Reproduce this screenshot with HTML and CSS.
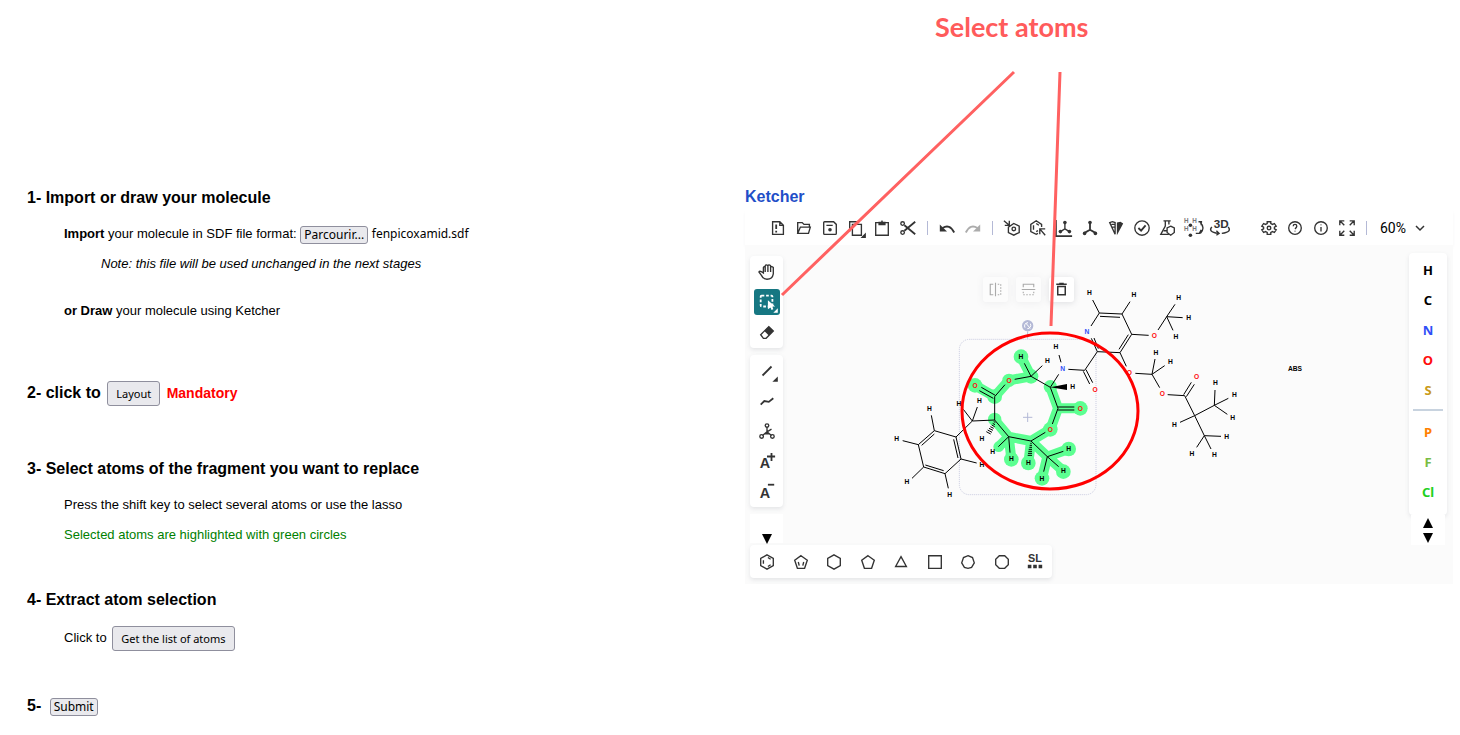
FILE: index.html
```html
<!DOCTYPE html>
<html lang="en">
<head>
    <meta charset="UTF-8">
    <meta name="viewport" content="width=device-width, initial-scale=1.0">
    <title>Fragment replacement</title>
    <link rel="stylesheet" href="styles.css">
</head>
<body>
<main class="page">
    <form class="steps" id="fragment-form">
        <section class="step">
            <h2>1- Import or draw your molecule</h2>
            <p><b>Import</b> your molecule in SDF file format:
                <button type="button" class="browse" id="browse">Parcourir...</button>
                <span class="file-name">fenpicoxamid.sdf</span>
                <input type="file" id="sdf-file" accept=".sdf" aria-label="SDF file" hidden></p>
            <p class="note">Note: this file will be used unchanged in the next stages</p>
            <p class="draw"><b>or Draw</b> your molecule using Ketcher</p>
        </section>

        <section class="step layout-step">
            <h2>2- click to <button type="button" class="big-button">Layout</button> <span class="mandatory">Mandatory</span></h2>
        </section>

        <section class="step">
            <h2>3- Select atoms of the fragment you want to replace</h2>
            <p>Press the shift key to select several atoms or use the lasso</p>
            <p class="green">Selected atoms are highlighted with green circles</p>
        </section>

        <section class="step">
            <h2>4- Extract atom selection</h2>
            <p>Click to <button type="button" class="big-button">Get the list of atoms</button></p>
        </section>

        <section class="step">
            <h2>5- <button type="submit" class="submit">Submit</button></h2>
        </section>
    </form>

    <section class="sketch">
        <p class="callout">Select atoms</p>
        <h2 class="ketcher-title">Ketcher</h2>

        <div class="editor">
            <div class="toolbar">
                <div class="tools">
                    <button type="button" aria-label="New"><svg viewBox="0 0 20 20"><path d="M4 3h8l4 4v10H4z M12 3v4h4"/><path d="M8 6v5M8 13v2" stroke-width="2"/></svg></button>
                    <button type="button" aria-label="Open"><svg viewBox="0 0 20 20"><path d="M3 16V4h5l2 2h6v3M3 16l3-7h11l-2 7z"/></svg></button>
                    <button type="button" aria-label="Save"><svg viewBox="0 0 20 20"><path d="M4 3h10l3 3v10q0 1-1 1H4q-1 0-1-1V4q0-1 1-1zM6 7h7"/><circle class="solid" cx="10" cy="12" r="2"/></svg></button>
                    <button type="button" aria-label="Copy"><svg viewBox="0 0 20 20"><path d="M3 14V3h10M6 6h10v12H6z"/><path class="solid" d="M21 15v6h-6z"/></svg></button>
                    <button type="button" aria-label="Paste"><svg viewBox="0 0 20 20"><path d="M3 4h14v14H3z"/><path class="solid" d="M6 3h3q1-3 2 0h3v4H6z"/></svg></button>
                    <button type="button" aria-label="Cut"><svg viewBox="0 0 20 20"><circle cx="4" cy="5" r="2"/><circle cx="4" cy="15" r="2"/><path d="M6 7l12 10M6 13L18 3" stroke-width="2"/></svg></button>
                    <span class="divider"></span>
                    <button type="button" aria-label="Undo"><svg viewBox="0 0 20 20"><path d="M5 10q8-5 13 5" stroke-width="2"/><path class="solid" d="M2 6v8h8z"/></svg></button>
                    <button type="button" aria-label="Redo" disabled><svg viewBox="0 0 20 20"><path d="M15 10q-8-5-13 5" stroke-width="2"/><path class="solid" d="M18 6v8h-8z"/></svg></button>
                    <span class="divider"></span>
                    <button type="button" aria-label="Aromatize"><svg viewBox="0 0 20 20"><path d="M12 5l6 3v7l-6 3-6-3V9z"/><circle cx="12" cy="11" r="2"/><path d="M1 2l6 5M7 2v5H2"/></svg></button>
                    <button type="button" aria-label="Dearomatize"><svg viewBox="0 0 20 20"><path d="M10 16l-2 1-6-3V6l6-4 6 4v3M5 7v5M8 5l3 2M8 14l2-1"/><path d="M12 11l6 7M12 17v-6h6"/></svg></button>
                    <button type="button" aria-label="Layout"><svg viewBox="0 0 20 20"><path d="M1 1v18h18" stroke-width="2"/><path d="M11 4v7l-5 3M11 11l5 3"/><circle class="solid" cx="11" cy="4" r="2"/><circle class="solid" cx="6" cy="14" r="2"/><circle class="solid" cx="16" cy="14" r="2"/></svg></button>
                    <button type="button" aria-label="Clean up"><svg viewBox="0 0 20 20"><path d="M10 4v8l-7 4M10 12l7 4" stroke-width="2"/><circle class="solid" cx="10" cy="4" r="2"/><circle class="solid" cx="4" cy="16" r="2"/><circle class="solid" cx="16" cy="16" r="2"/></svg></button>
                    <button type="button" aria-label="Calculate CIP"><svg viewBox="0 0 20 20"><path d="M9 17L3 4l3-1 3 1zM5 6h4M6 9h3"/><path class="solid" d="M11 18V4l4-1 3 2z"/></svg></button>
                    <button type="button" aria-label="Check structure"><svg viewBox="0 0 20 20"><circle cx="10" cy="10" r="8"/><path d="M6 10l3 3 5-6" stroke-width="2"/></svg></button>
                    <button type="button" aria-label="Calculated values"><svg viewBox="0 0 20 20"><path d="M5 2h8M7 2v6L2 17h9M11 2v4"/><path d="M13 8l4 2v5l-4 3-4-3v-5zM5 13h4"/></svg></button>
                    <button type="button" aria-label="Add or remove explicit hydrogens"><svg viewBox="0 0 20 20"><g class="solid"><circle cx="6" cy="7" r="2"/><circle cx="6" cy="18" r="2"/></g><text class="icon-h" x="-1" y="4">H</text><text class="icon-h" x="8" y="4">H</text><text class="icon-h" x="-1" y="13">H</text><text class="icon-h" x="8" y="13">H</text><path d="M17 4q6 6 0 12M15 3h4M18 3v4M18 12l-2 4h-4"/></svg></button>
                    <button type="button" aria-label="3D viewer"><svg viewBox="0 0 20 20"><text class="icon-3d" x="3" y="10">3D</text><path d="M1 9q-5 5 7 7M6 13l3 3-3 2M19 9q5 5-7 7"/></svg></button>
                </div>
                <div class="tools">
                    <button type="button" aria-label="Settings"><svg viewBox="0 0 20 20"><path d="M8 3h4v2l2 1 2-1 2 3-2 1v2l2 1-2 3-2-1-2 1v2H8v-2l-2-1-2 1-2-3 2-1V9L2 8l2-3 2 1 2-1z"/><circle cx="10" cy="10" r="2"/></svg></button>
                    <button type="button" aria-label="Help"><svg viewBox="0 0 20 20"><circle cx="10" cy="10" r="7"/><path d="M8 8q0-2 2-2t2 2q0 1-2 3M10 13v1"/></svg></button>
                    <button type="button" aria-label="About"><svg viewBox="0 0 20 20"><circle cx="10" cy="10" r="7"/><path d="M10 9v5M10 6v1"/></svg></button>
                    <button type="button" aria-label="Fullscreen"><svg viewBox="0 0 20 20"><path d="M2 7V2h5M2 2l5 5M13 2h5v5M18 2l-5 5M2 13v5h5M2 18l5-5M18 13v5h-5M18 18l-5-5"/></svg></button>
                    <span class="divider"></span>
                    <label class="zoom">
                        <select aria-label="Zoom"><option>60%</option><option>100%</option><option>150%</option></select>
                        <svg viewBox="0 0 10 10"><path d="M1 3l4 4 4-4"/></svg>
                    </label>
                </div>
            </div>

            <div class="workspace">
                <!-- drawing area, 3 units per pixel -->
                <svg class="canvas" viewBox="-405 -75 2124 1014" preserveAspectRatio="xMinYMin meet" role="img" aria-label="Fenpicoxamid molecule">
                    <g class="selected">
                        <path d="M285 346L344 380L387 331L453 319L423 260M511 352L534 415H601M534 415L511 478L453 513L386 500L344 450M386 500L356 530M386 500L394 566M453 513L445 579M453 513L502 560L566 537M502 560L550 603M502 560L486 625"/>
                        <circle cx="285" cy="346" r="22"/><circle cx="387" cy="331" r="20"/><circle cx="423" cy="260" r="22"/>
                        <circle cx="453" cy="319" r="22"/><circle cx="511" cy="350" r="20"/><circle cx="601" cy="415" r="22"/>
                        <circle cx="511" cy="478" r="22"/><circle cx="344" cy="380" r="22"/><circle cx="344" cy="448" r="20"/>
                        <circle cx="394" cy="568" r="22"/><circle cx="445" cy="579" r="22"/><circle cx="356" cy="530" r="16"/>
                        <circle cx="566" cy="537" r="22"/><circle cx="550" cy="605" r="22"/><circle cx="486" cy="625" r="22"/>
                    </g>
                    <rect class="selection-box" x="238" y="208" width="410" height="466" rx="30"/>
                    <path class="selection-cross" d="M443 428v28M429 442h28M443 184v22"/>
                    <circle class="rotate-handle" cx="443" cy="167" r="17"/>
                    <path class="rotate-arrows" d="M435 173a10 10 0 0 1 9-15M451 161a10 10 0 0 1-9 15M437 159l14 16"/>

                    <!-- benzyl ring -->
                    <path class="bond" d="M163 482L228 501L243 567L195 611L131 591L115 524ZM163 492L125 526M221 508L234 564M191 602L136 585"/>
                    <path class="bond" d="M163 482L154 436M115 524L68 512M131 591L96 625M195 611L205 655M243 567L290 579M228 501L277 453L292 411M277 453L250 418M277 453L344 450"/>
                    <!-- nine membered ring -->
                    <path class="bond" d="M344 450V380L375 344M346 376L304 352M340 385L298 362M404 328L453 319L433 280M453 319L487 287M453 319L511 352L536 313M511 352L534 415L517 462M534 411H583M534 420H583M496 487L453 513L386 500L344 450M386 500L355 530M386 500L390 548M453 513L502 560L550 544M502 560L536 590M502 560L491 605"/>
                    <path class="wedge" d="M511 352L561 342V360Z"/>
                    <path class="bond" d="M341 455l5 2M338 460l7 4M335 465l9 5M331 470l10 5M327 475l12 6M323 480l13 7M319 485l13 7M451 520h4M449 526h7M448 532h8M446 538h10M445 544h11M444 550h12M443 556h13"/>
                    <!-- amide and pyridine -->
                    <path class="bond" d="M543 277L537 255M565 298L614 301L652 245M610 304L629 342M618 299L638 338M633 168L658 129L726 132L755 193L720 248L652 245L634 205M655 236L642 204M660 139L720 142M745 194L717 238M658 129L638 90M726 132L750 95M755 193L806 196M834 180L860 140L885 103M860 140L908 143M860 140L879 181"/>
                    <!-- ester chain -->
                    <path class="bond" d="M720 248L739 289M766 310L816 313L825 267M816 313L854 287M816 313L839 353M863 374L914 377L944 437L900 457M911 374L934 337M919 380L943 343M944 437L1003 406L1005 360M1003 406L1045 385M1003 406L1042 433M944 437L973 497L1023 499M973 497L950 532M973 497L993 537"/>

                    <g class="atom">
                        <text x="628" y="76">H</text><text x="762" y="82">H</text><text x="896" y="91">H</text><text x="926" y="151">H</text>
                        <text x="888" y="207">H</text><text x="828" y="254">H</text><text x="871" y="282">H</text><text x="1006" y="345">H</text>
                        <text x="1063" y="382">H</text><text x="1058" y="450">H</text><text x="883" y="471">H</text><text x="1040" y="506">H</text>
                        <text x="936" y="559">H</text><text x="1003" y="562">H</text><text x="528" y="238">H</text><text x="502" y="278">H</text>
                        <text x="423" y="267">H</text><text x="578" y="357">H</text><text x="298" y="398">H</text><text x="237" y="407">H</text>
                        <text x="148" y="423">H</text><text x="50" y="514">H</text><text x="81" y="643">H</text><text x="209" y="681">H</text>
                        <text x="306" y="591">H</text><text x="306" y="513">H</text><text x="338" y="553">H</text><text x="394" y="573">H</text>
                        <text x="445" y="586">H</text><text x="566" y="544">H</text><text x="550" y="610">H</text><text x="486" y="632">H</text>
                        <text x="1245" y="303">ABS</text>
                    </g>
                    <g class="atom oxygen">
                        <text x="387" y="338">O</text><text x="285" y="353">O</text><text x="601" y="422">O</text><text x="511" y="485">O</text>
                        <text x="645" y="365">O</text><text x="823" y="204">O</text><text x="748" y="316">O</text><text x="847" y="378">O</text>
                        <text x="950" y="326">O</text>
                    </g>
                    <g class="atom nitrogen">
                        <text x="548" y="303">N</text><text x="621" y="191">N</text>
                    </g>
                </svg>

                <div class="floating-tools">
                    <button type="button" aria-label="Flip horizontally" disabled><svg viewBox="0 0 20 20"><path d="M7 3H3v14h4M10 1v18"/><path d="M13 3h4v14h-4" stroke-dasharray="2 2"/></svg></button>
                    <button type="button" aria-label="Flip vertically" disabled><svg viewBox="0 0 20 20"><path d="M3 7V3h14v4M1 10h18"/><path d="M3 13v4h14v-4" stroke-dasharray="2 2"/></svg></button>
                    <button type="button" aria-label="Delete"><svg viewBox="0 0 20 20"><path d="M5 6v11h10V6zM3 3h14M7 2h6" stroke-width="2"/></svg></button>
                </div>

                <div class="left-tools">
                    <div class="panel">
                        <button type="button" aria-label="Hand"><svg viewBox="0 0 20 20"><path d="M6 11V5q1-2 2 0v5V3q1-2 3 0v7V3q1-2 3 0v7V5q1-2 3 0v7q-1 6-7 6-4 0-6-4l-3-4q1-2 5 1z"/></svg></button>
                        <button type="button" class="active" aria-label="Rectangle selection"><svg viewBox="0 0 20 20"><rect x="3" y="3" width="13" height="12" rx="1" stroke-width="2" stroke-dasharray="3 2"/><path class="solid" d="M11 8v10l3-2 1 3 2-1-1-3h3zM22 17v5h-5z"/></svg></button>
                        <button type="button" aria-label="Erase"><svg viewBox="0 0 20 20"><path d="M3 13l9-9 5 5-8 8H6z"/><path class="solid" d="M7 9l5-5 5 5-5 5z"/></svg></button>
                    </div>
                    <div class="panel">
                        <button type="button" aria-label="Single bond"><svg viewBox="0 0 20 20"><path d="M5 15L15 5" stroke-width="2"/><path class="solid" d="M22 16v6h-6z"/></svg></button>
                        <button type="button" aria-label="Chain"><svg viewBox="0 0 20 20"><path d="M3 14l4-4 5 1 5-4" stroke-width="2"/></svg></button>
                        <button type="button" aria-label="Enhanced stereochemistry"><svg viewBox="0 0 20 20"><path d="M10 5v6l-5 4M10 11l5 4M10 11l5-3M7 13h6"/><circle cx="10" cy="4" r="2"/><circle cx="4" cy="16" r="2"/><circle cx="16" cy="16" r="2"/></svg></button>
                        <button type="button" aria-label="Charge plus"><svg viewBox="0 0 20 20"><text class="charge" x="2" y="18">A</text><path d="M15 1v9M10 5h9" stroke-width="2"/></svg></button>
                        <button type="button" aria-label="Charge minus"><svg viewBox="0 0 20 20"><text class="charge" x="2" y="18">A</text><path d="M11 3h7" stroke-width="2"/></svg></button>
                    </div>
                    <button type="button" class="more" aria-label="Scroll tools down"><svg class="arrow" viewBox="0 0 10 10"><path d="M0 0h10L5 10z"/></svg></button>
                </div>

                <div class="right-tools">
                    <div class="panel atoms">
                        <button type="button">H</button>
                        <button type="button">C</button>
                        <button type="button" class="n">N</button>
                        <button type="button" class="o">O</button>
                        <button type="button" class="s">S</button>
                        <hr>
                        <button type="button" class="p">P</button>
                        <button type="button" class="f">F</button>
                        <button type="button" class="cl">Cl</button>
                    </div>
                    <div class="scroll">
                        <button type="button" aria-label="Scroll atoms up"><svg class="arrow" viewBox="0 0 10 10"><path d="M0 10h10L5 0z"/></svg></button>
                        <button type="button" aria-label="Scroll atoms down"><svg class="arrow" viewBox="0 0 10 10"><path d="M0 0h10L5 10z"/></svg></button>
                    </div>
                </div>

                <div class="panel templates">
                    <button type="button" aria-label="Benzene"><svg viewBox="0 0 20 20"><path d="M10 2l7 4v8l-7 4-7-4V6zM6 8v4M11 5l3 2M11 15l3-2"/></svg></button>
                    <button type="button" aria-label="Cyclopentadiene"><svg viewBox="0 0 20 20"><path d="M10 3l7 5-3 9H6L3 8zM7 10l1 4M13 10l-1 4"/></svg></button>
                    <button type="button" aria-label="Cyclohexane"><svg viewBox="0 0 20 20"><path d="M10 2l7 4v8l-7 4-7-4V6z"/></svg></button>
                    <button type="button" aria-label="Cyclopentane"><svg viewBox="0 0 20 20"><path d="M10 3l7 5-3 9H6L3 8z"/></svg></button>
                    <button type="button" aria-label="Cyclopropane"><svg viewBox="0 0 20 20"><path d="M10 4l6 11H4z"/></svg></button>
                    <button type="button" aria-label="Cyclobutane"><svg viewBox="0 0 20 20"><path d="M3 3h14v14H3z"/></svg></button>
                    <button type="button" aria-label="Cycloheptane"><svg viewBox="0 0 20 20"><path d="M10 3l5 2 2 6-3 5-4 1-4-1-3-5 2-6z"/></svg></button>
                    <button type="button" aria-label="Cyclooctane"><svg viewBox="0 0 20 20"><path d="M7 3h6l4 4v6l-4 4H7l-4-4V7z"/></svg></button>
                    <button type="button" aria-label="Structure library"><svg viewBox="0 0 20 20"><text class="library" x="10" y="10">SL</text><path class="solid" d="M2 13h4v4H2zM8 13h4v4H8zM14 13h4v4h-4z"/></svg></button>
                </div>
            </div>
        </div>

        <!-- arrows and circle over the editor -->
        <svg class="annotation" viewBox="0 0 708 583" aria-hidden="true">
            <path class="pointer" d="M269 72L37 295M315 72L306 326"/>
            <ellipse cx="305" cy="411" rx="88" ry="78"/>
        </svg>
    </section>
</main>
<script>
    const fileInput = document.getElementById('sdf-file');

    document.getElementById('browse').addEventListener('click', function () {
        fileInput.click();
    });

    fileInput.addEventListener('change', function () {
        if (fileInput.files.length) {
            document.querySelector('.file-name').textContent = fileInput.files[0].name;
        }
    });
</script>
</body>
</html>
```
FILE: styles.css
```css
* {
    box-sizing: border-box;
}

body {
    margin: 0;
    font-family: "Liberation Sans", Arial, sans-serif;
    font-size: 13px;
    line-height: 20px;
    color: #000;
    background-color: #fff;
}

h2, p {
    margin: 0;
}

h2 {
    font-size: 16px;
    line-height: 20px;
}

button, select {
    font-family: "Noto Sans", sans-serif;
    color: #000;
    cursor: pointer;
}

.page {
    display: grid;
    grid-template-columns: 1fr 1fr;
    gap: 10px;
    padding: 0 7px 0 27px;
}

/* instructions */
.steps {
    padding-top: 188px;
}

.step {
    margin-bottom: 45px;
}

.step p {
    margin: 10px 0 0 37px;
}

.step h2 + p {
    margin-top: 16px;
}

.step p.note {
    margin-left: 74px;
    font-style: italic;
}

.step p.draw {
    margin-top: 27px;
}

.layout-step {
    padding: 15px 0 8px;
}

.steps button {
    background-color: #e9e9ed;
    border: 1px solid #8f8f9d;
    border-radius: 3px;
    vertical-align: middle;
}

.steps .browse, .steps .submit {
    height: 18px;
    padding: 0 3px;
    font-size: 12px;
    line-height: 16px;
}

.steps .submit {
    margin-left: 4px;
}

.steps .big-button {
    height: 25px;
    margin: 0 2px;
    padding: 0 8px;
    font-size: 11px;
}

.file-name {
    font-family: "Noto Sans", sans-serif;
    font-size: 12px;
}

.mandatory {
    color: #f00;
    font-size: 14px;
}

.green {
    color: #008000;
}

/* editor */
.sketch {
    position: relative;
}

.callout {
    padding: 7px 0 140px 190px;
    font-family: Lato, sans-serif;
    font-size: 27px;
    font-weight: bold;
    line-height: 40px;
    color: #ff5b5b;
}

.ketcher-title {
    color: #1f4fc8;
}

.editor button {
    display: flex;
    align-items: center;
    justify-content: center;
    padding: 0;
    background: none;
    border: 0;
}

.editor button svg {
    width: 18px;
    height: 18px;
    overflow: visible;
    fill: none;
    stroke: #333;
    stroke-width: 1.5;
}

.editor button:disabled {
    opacity: 0.4;
}

.editor button .solid {
    fill: #333;
    stroke: none;
}

.editor button text {
    fill: #333;
    stroke: none;
    font-family: "Liberation Sans", sans-serif;
    font-weight: bold;
}

.editor button .arrow {
    width: 10px;
    height: 10px;
    fill: #000;
    stroke: none;
}

.editor button .icon-h {
    fill: #777;
    font-size: 7px;
}

.icon-3d {
    font-size: 13px;
}

.charge {
    font-size: 16px;
}

.library {
    font-size: 12px;
    text-anchor: middle;
}

.toolbar {
    position: relative;
    display: flex;
    justify-content: space-between;
    height: 38px;
    padding: 3px 28px 0 23px;
    box-shadow: 0 4px 4px -2px rgba(100, 105, 120, 0.2);
}

.tools {
    display: flex;
    align-items: center;
    gap: 6px;
}

.tools button {
    width: 20px;
    height: 20px;
}

.divider {
    width: 1px;
    height: 14px;
    margin: 0 3px;
    background-color: #b4b9d6;
}

.zoom {
    display: flex;
    align-items: center;
    margin-left: 4px;
}

.zoom select {
    width: 35px;
    padding: 0;
    appearance: none;
    background: none;
    border: 0;
    font-family: Roboto, sans-serif;
    font-size: 14px;
}

.zoom svg {
    width: 10px;
    height: 10px;
    fill: none;
    stroke: #333;
    stroke-width: 1.5;
}

.workspace {
    position: relative;
    display: grid;
    grid-template-columns: 33px 1fr 38px;
    grid-template-rows: auto 33px;
    padding: 11px 6px 6px 5px;
    background-color: #fbfbfb;
}

.canvas {
    position: absolute;
    top: 0;
    left: 0;
    width: 100%;
}

.panel {
    background-color: #fff;
    border-radius: 4px;
    box-shadow: 0 2px 4px rgba(100, 105, 120, 0.15);
}

.left-tools {
    position: relative;
    display: flex;
    flex-direction: column;
    gap: 7px;
}

.left-tools .panel {
    display: flex;
    flex-direction: column;
    align-items: center;
    gap: 4px;
    padding: 3px 0;
}

.left-tools .panel button {
    width: 26px;
    height: 26px;
}

.left-tools .active {
    background-color: #167782;
    border-radius: 3px;
}

.left-tools .active svg {
    stroke: #fff;
}

.left-tools .active .solid {
    fill: #fff;
}

.left-tools .more {
    height: 29px;
    padding-top: 20px;
    background-color: #fff;
}

.right-tools {
    position: relative;
    grid-column: 3;
    margin-top: -3px;
}

.atoms {
    display: flex;
    flex-direction: column;
    align-items: center;
    height: 262px;
    padding-top: 2px;
}

.atoms button {
    width: 30px;
    height: 30px;
    font-size: 13px;
    font-weight: bold;
}

.atoms hr {
    width: 30px;
    height: 2px;
    margin: 4px 0 6px;
    background-color: #c8d3df;
    border: 0;
}

.atoms .n {
    color: #304ff7;
}

.atoms .o {
    color: #ff0d0d;
}

.atoms .s {
    color: #c99a19;
}

.atoms .p {
    color: #ff8000;
}

.atoms .f {
    color: #78bc42;
}

.atoms .cl {
    color: #1fd01f;
}

.scroll {
    margin: 0 2px;
    background-color: #fff;
}

.scroll button {
    width: 100%;
    height: 15px;
}

.templates {
    position: relative;
    grid-column: 1 / 3;
    justify-self: start;
    display: flex;
    align-items: center;
    justify-content: space-between;
    width: 302px;
    padding: 0 7px;
}

.templates button {
    width: 20px;
    height: 33px;
}

.floating-tools {
    position: absolute;
    top: 32px;
    left: 238px;
    display: flex;
    gap: 8px;
}

.floating-tools button {
    width: 25px;
    height: 25px;
    background-color: #fff;
    border-radius: 3px;
    box-shadow: 0 1px 6px rgba(100, 105, 120, 0.2);
}

.floating-tools button svg {
    width: 15px;
    height: 15px;
}

/* molecule */
.selected {
    fill: #5cff91;
}

.selected path {
    fill: none;
    stroke: #5cff91;
    stroke-width: 30;
    stroke-linejoin: round;
}

.selection-box {
    fill: none;
    stroke: #c9cbe0;
    stroke-width: 3;
    stroke-dasharray: 3 3;
}

.selection-cross {
    stroke: #b4b9d6;
    stroke-width: 3;
}

.rotate-handle {
    fill: #b4b9d6;
}

.rotate-arrows {
    fill: none;
    stroke: #fff;
    stroke-width: 3;
}

.bond {
    fill: none;
    stroke: #000;
    stroke-width: 3;
}

.wedge {
    fill: #000;
}

.atom {
    font-family: "Liberation Sans", sans-serif;
    font-size: 20px;
    font-weight: bold;
    text-anchor: middle;
}

.oxygen {
    fill: #ff0d0d;
}

.nitrogen {
    fill: #304ff7;
}

.annotation {
    position: absolute;
    top: 0;
    left: 0;
    width: 100%;
    overflow: visible;
    pointer-events: none;
    fill: none;
    stroke: #f00;
    stroke-width: 3;
}

.annotation .pointer {
    stroke: #ff6161;
}
```
